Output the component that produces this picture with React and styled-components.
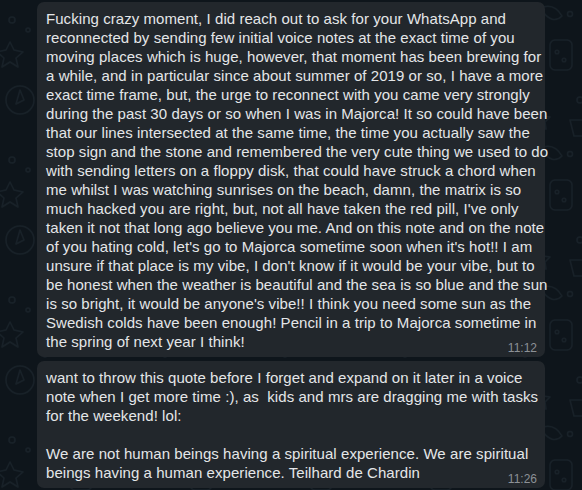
import React from "react";
import styled, { createGlobalStyle } from "styled-components";

const Global = createGlobalStyle`
  html, body { margin: 0; padding: 0; background: #0e151b; }
  body { font-family: "Liberation Sans", Arial, sans-serif; }
`;

const Page = styled.div`
  position: relative;
  width: 582px;
  height: 490px;
  overflow: hidden;
  background: #0e151b;
`;

const Doodles = styled.svg`
  position: absolute;
  inset: 0;
  width: 100%;
  height: 100%;
`;

const Chat = styled.div`
  position: relative;
  display: flex;
  flex-direction: column;
  gap: 4px;
  padding: 2px 0 0 37px;
  width: 508px;
`;

const Bubble = styled.div`
  position: relative;
  background: #22272c;
  border-radius: 7px;
  padding: 7px 8px 6px 9px;
  color: #e4e6e8;
  font-size: 15px;
  line-height: 19px;
  letter-spacing: 0.06px;
`;

const Line = styled.div`
  white-space: pre;
  min-height: 19px;
`;

const Time = styled.span`
  position: absolute;
  right: 8px;
  bottom: 1px;
  font-size: 12px;
  line-height: 16px;
  letter-spacing: 0;
  color: #8c9196;
`;

const first = [
  "Fucking crazy moment, I did reach out to ask for your WhatsApp and",
  "reconnected by sending few initial voice notes at the exact time of you",
  "moving places which is huge, however, that moment has been brewing for",
  "a while, and in particular since about summer of 2019 or so, I have a more",
  "exact time frame, but, the urge to reconnect with you came very strongly",
  "during the past 30 days or so when I was in Majorca! It so could have been",
  "that our lines intersected at the same time, the time you actually saw the",
  "stop sign and the stone and remembered the very cute thing we used to do",
  "with sending letters on a floppy disk, that could have struck a chord when",
  "me whilst I was watching sunrises on the beach, damn, the matrix is so",
  "much hacked you are right, but, not all have taken the red pill, I've only",
  "taken it not that long ago believe you me. And on this note and on the note",
  "of you hating cold, let's go to Majorca sometime soon when it's hot!! I am",
  "unsure if that place is my vibe, I don't know if it would be your vibe, but to",
  "be honest when the weather is beautiful and the sea is so blue and the sun",
  "is so bright, it would be anyone's vibe!! I think you need some sun as the",
  "Swedish colds have been enough! Pencil in a trip to Majorca sometime in",
  "the spring of next year I think!",
];

const second = [
  "want to throw this quote before I forget and expand on it later in a voice",
  "note when I get more time :), as  kids and mrs are dragging me with tasks",
  "for the weekend! lol:",
  "",
  "We are not human beings having a spiritual experience. We are spiritual",
  "beings having a human experience. Teilhard de Chardin",
];

function Message({ lines, time }) {
  return (
    <Bubble>
      {lines.map((l, i) => (
        <Line key={i}>{l}</Line>
      ))}
      <Time>{time}</Time>
    </Bubble>
  );
}

function Pattern() {
  const s = "#182128";
  return (
    <Doodles viewBox="0 0 582 490">
      <defs>
        <pattern id="wa" width="120" height="140" patternUnits="userSpaceOnUse">
          <g fill="none" stroke={s} strokeWidth="1.5" strokeLinejoin="round" strokeLinecap="round">
            <path d="M10 42 l4 8 9 2 -7 6 2 9 -8 -5 -8 5 2 -9 -7 -6 9 -2z" />
            <circle cx="12" cy="20" r="3" />
            <circle cx="28" cy="30" r="2" />
            <circle cx="90" cy="14" r="2.5" />
            <path d="M60 8 q14 -6 22 8 q-10 10 -22 -8z" />
            <rect x="70" y="40" width="22" height="30" rx="5" />
            <circle cx="77" cy="52" r="1.8" />
            <circle cx="84" cy="60" r="1.8" />
            <circle cx="20" cy="100" r="14" />
            <path d="M20 90 l-4 14 8 -4z" />
            <path d="M60 110 l3 6 7 1 -5 5 1 7 -6 -3 -6 3 1 -7 -5 -5 7 -1z" />
            <circle cx="100" cy="100" r="3" />
            <path d="M90 120 h24 l-4 16 h-16z" />
            <circle cx="45" cy="75" r="2" />
          </g>
        </pattern>
      </defs>
      <rect width="582" height="490" fill="url(#wa)" />
    </Doodles>
  );
}

export default function App() {
  return (
    <Page>
      <Global />
      <Pattern />
      <Chat>
        <Message lines={first} time="11:12" />
        <Message lines={second} time="11:26" />
      </Chat>
    </Page>
  );
}
